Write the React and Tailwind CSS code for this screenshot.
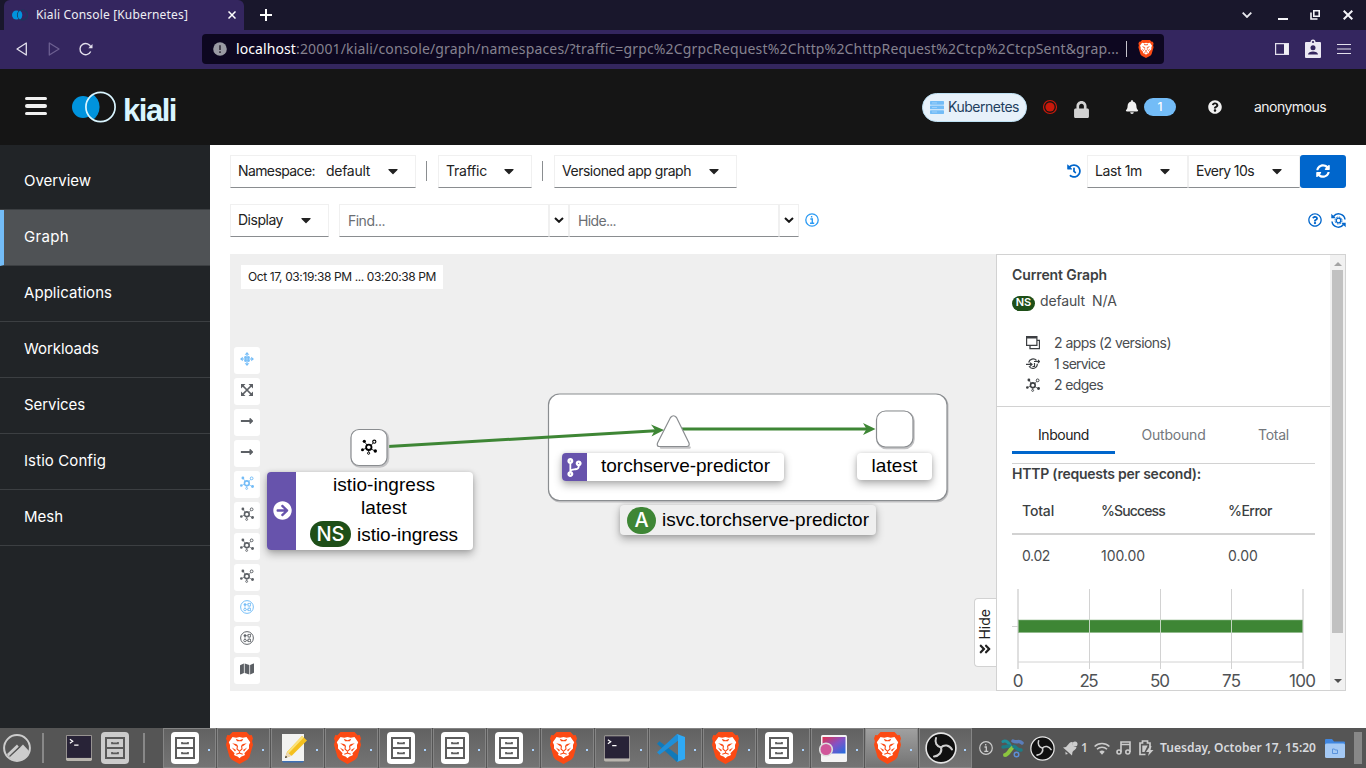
import { useLayoutEffect, useRef, useState } from "react";
import {
  FaArrowCircleRight, FaBell, FaCaretDown, FaCodeBranch, FaAngleDoubleDown, FaHistory,
  FaLock, FaLongArrowAltRight, FaMap, FaQuestionCircle, FaRegQuestionCircle, FaServer, FaSyncAlt,
} from "react-icons/fa";

/* A single line of text whose tracking is adjusted to fill the given width. */
function Text({ w, className = "", children }) {
  const ref = useRef(null);
  const [spacing, setSpacing] = useState(0);
  useLayoutEffect(() => {
    const natural = ref.current.getBoundingClientRect().width;
    setSpacing((w - natural) / String(children).length);
  }, [w, children]);
  return (
    <span ref={ref} className={`inline-block shrink-0 whitespace-nowrap ${className}`} style={{ letterSpacing: spacing }}>
      {children}
    </span>
  );
}

function Lion({ className }) {
  return (
    <svg viewBox="0 0 27 32" className={className}>
      <path fill="#fb4a14" d="M6.500 0h14l3 3.200 2.200-.3L27 6.500l-.9 2.700.9 3.600-3.600 12.400-2.200 2.600-7.700 4.200-7.700-4.200-2.200-2.600L0 12.800l.9-3.600L0 6.500l1.300-3.600 2.200.3z" />
      <path fill="#fff" d="M6.500 5l3.700.7 3.300-.8 3.300.8 3.700-.7 3.700 5.200-1.200 2.700 0 3.600-4.600 4.700.6 1.800-3 1.500-2.500 2.500-2.500-2.500-3-1.500.6-1.800L4 16.500l0-3.600-1.200-2.700z" />
      <path fill="#fb4a14" d="M6.200 11.300l3.800.8 1.500.9-1 1.600zM20.800 11.300l-3.800.8-1.500.9 1 1.600zM9.700 6.800l3.800 1.400 3.800-1.400-1.300 2.500h-5zM5.800 15.500l4.200 2.600-1 1.500zM21.200 15.500L17 18.100l1 1.500z" />
      <path stroke="#fb4a14" strokeWidth="1.100" fill="none" d="M11.500 13.500l-.5 3.500 2.500 2.300 2.500-2.300-.5-3.500M13.500 19v2.200M10.300 22.300l3.200-1.300 3.200 1.300" />
      <path fill="#fb4a14" d="M9 24.500l2.500 0 2 1.800 2-1.800 2.500 0-4.500 3z" />
      <path fill="#fff" d="M11 23.300h5l-2.500 2.300z" />
    </svg>
  );
}

function Topology({ className }) {
  return (
    <svg viewBox="0 0 16 16" className={className} fill="none" stroke="currentColor">
      <circle cx="7.800" cy="8.300" r="2.700" strokeWidth="1.800" />
      <circle cx="13.300" cy="2.700" r="1.600" strokeWidth="1.100" />
      <circle cx="7.600" cy="14.200" r="1.100" strokeWidth="1" />
      <g fill="currentColor" stroke="none">
        <circle cx="3.300" cy="2.300" r="1.600" />
        <circle cx="1.500" cy="10.800" r="1.500" />
        <circle cx="14.300" cy="12" r="1.700" />
      </g>
      <path strokeWidth=".8" d="M4 3.400l2 2.700M2.600 10.300l2.700-1M10 6.500l2.200-2.700M10 9.800l3 1.700M7.700 11v2" />
    </svg>
  );
}

function Boxes({ className }) {
  return (
    <svg viewBox="0 0 16 16" className={className} fill="none" stroke="currentColor">
      <circle cx="8" cy="8" r="7.300" strokeWidth="1.100" />
      <circle cx="5.700" cy="5.300" r="1.300" fill="currentColor" strokeWidth=".6" />
      <rect x="9.200" y="3.800" width="2.800" height="3" strokeWidth=".9" />
      <circle cx="5.700" cy="10.900" r="1.400" strokeWidth="1" />
      <rect x="9.200" y="9.400" width="2.800" height="2.800" strokeWidth=".9" />
      <path strokeWidth=".8" d="M7 5.300h2M5.700 7v2M7.200 10.900h2M10.500 7v2" />
    </svg>
  );
}

function Cabinet({ className, bg, fg }) {
  return (
    <svg viewBox="0 0 28 32" className={className}>
      <rect width="28" height="32" rx="4" fill={bg} />
      <g fill="none" stroke={fg} strokeWidth="2">
        <path d="M5 6h18v20H5zM5 16h18" />
        <path strokeWidth="1.700" d="M11 10v1.300h6V10M11 20v1.300h6V20" />
      </g>
    </svg>
  );
}

function Terminal({ className }) {
  return (
    <svg viewBox="0 0 27 27" className={className}>
      <rect width="27" height="27" rx="1.500" fill="#b9b5ae" />
      <rect x=".8" y=".8" width="25.400" height="23" fill="#282337" />
      <path d="M4 4.500l3 2-3 2M8.500 10.500h4.500" fill="none" stroke="#fff" strokeWidth="1.200" />
    </svg>
  );
}

function Notes({ className }) {
  return (
    <svg viewBox="0 0 27 30" className={className}>
      <path d="M2 1h22v27H2z" fill="#f3f3f1" />
      <path d="M2 28h22l-1 1.500H3z" fill="#3d6fb5" />
      <path d="M5 25l2-6L22 3l5 4.500-15 15z" fill="#f4c01e" />
      <path d="M7 19L22 3l1.800 1.600L8.500 20.500z" fill="#fbe27a" />
      <path d="M5 25l2-6 4.500 3.800z" fill="#ead8b8" />
      <path d="M5 25l.8-2.300 1.500 1.500z" fill="#222" />
    </svg>
  );
}

function Code({ className }) {
  return (
    <svg viewBox="0 0 28 28" className={className}>
      <path fill="#1179b8" d="M0 9.700l2.500-2.500L22 22v5L20 28z" />
      <path fill="#1f8fd8" d="M0 18.300l2.500 2.500L22 6V1L20 0z" />
      <path fill="#2fa9f4" d="M20 0l8 3v22l-8 3 1-2V2z" />
    </svg>
  );
}

function Screenshot({ className }) {
  return (
    <svg viewBox="0 0 28 27" className={className}>
      <defs>
        <linearGradient id="shot" x1="0" y1="0" x2="1" y2="1">
          <stop offset="0" stopColor="#e2304d" /><stop offset=".5" stopColor="#8552c4" /><stop offset="1" stopColor="#1f6fe0" />
        </linearGradient>
      </defs>
      <rect x="2" y="0" width="26" height="27" rx="1.500" fill="#f4f4f4" />
      <rect x="3.500" y="2" width="23" height="16.500" fill="url(#shot)" />
      <circle cx="7" cy="14.500" r="6.300" fill="#d0569a" stroke="#ddd" strokeWidth="1.600" />
    </svg>
  );
}

function Obs({ className }) {
  return (
    <svg viewBox="0 0 32 32" className={className}>
      <circle cx="16" cy="16" r="14.900" fill="#101010" stroke="#e6e6e6" strokeWidth="1.600" />
      <g fill="none" stroke="#cfcfcf" strokeWidth="2" strokeLinecap="round">
        <path d="M16 15.500c-4.500-1-6.500-5-5-9.500" />
        <path d="M16 15.500c3-3.500 8.500-2.500 11 2" />
        <path d="M16 15.500c1.500 4.500-2 8.500-7 9" />
      </g>
    </svg>
  );
}

function Swirl({ className }) {
  return (
    <svg viewBox="0 0 24 20" className={className} fill="none" strokeLinecap="round">
      <path d="M2 3.500c3-1.500 6 1 8 5.500" stroke="#1f8f9a" strokeWidth="3" />
      <path d="M4 17c3 0 4-4 7-7" stroke="#8cc63f" strokeWidth="4" />
      <path d="M12 3c4 2 6-1 9 2" stroke="#5a7dba" strokeWidth="3.500" />
      <path d="M13 8.500c3 1 3 4 7 3.500M2 9c3 0 4-1 6-1" stroke="#1d7d86" strokeWidth="3.500" />
      <circle cx="15.500" cy="16.500" r="2.300" stroke="#5d8fd8" strokeWidth="1.400" />
    </svg>
  );
}

const Kiali = ({ className }) => (
  <svg viewBox="0 0 46 32" className={className}>
    <circle cx="11" cy="16" r="11" fill="#0093dd" />
    <path d="M20.500 3a15.500 15.500 0 0 1 0 26 15.500 15.500 0 0 1 0-26z" fill="#0093dd" />
    <circle cx="28.500" cy="16" r="14.600" fill="none" stroke="#d9f5ff" strokeWidth="1.700" />
  </svg>
);

function Browser() {
  return (
    <>
      <div className="flex h-[30px] items-center bg-[#19172c] pl-1 text-white">
        <div className="flex h-full w-60 items-center rounded-t-md bg-[#34265f] pl-2">
          <svg viewBox="0 0 16 12" className="h-3 w-4">
            <circle cx="4.500" cy="6" r="4.500" fill="#0093dd" />
            <circle cx="10.500" cy="6" r="5" fill="none" stroke="#173b5c" strokeWidth="1.200" />
            <path d="M8 1.500a5.500 5.500 0 0 1 0 9 5.500 5.500 0 0 1 0-9z" fill="#0093dd" />
          </svg>
          <Text w={152} className="ml-2 font-['Noto_Sans'] text-xs text-[#eeeef4]">Kiali Console [Kubernetes]</Text>
          <svg viewBox="0 0 8 8" className="ml-10 h-2 w-2" stroke="#fff" strokeWidth="1.500"><path d="M.5.5l7 7M7.500.5l-7 7" /></svg>
        </div>
        <svg viewBox="0 0 12 12" className="ml-4 h-3 w-3" stroke="#fff" strokeWidth="2"><path d="M6 0v12M0 6h12" /></svg>
        <div className="ml-auto flex items-center pr-[13px]">
          <svg viewBox="0 0 10 6" className="mr-[26px] h-1.5 w-2.5" fill="none" stroke="#e8e8ee" strokeWidth="1.800"><path d="M.7.700L5 5 9.300.7" /></svg>
          <svg viewBox="0 0 10 10" className="mr-[22px] h-2.5 w-2.5" fill="#f4f4f8"><path d="M0 8h10v2H0z" /></svg>
          <svg viewBox="0 0 10 10" className="mr-[23px] h-2.5 w-2.5" fill="none" stroke="#f4f4f8" strokeWidth="1.600"><path d="M3.800.8h5.400v5.400H3.800zM1 2.500V9h6.500" /></svg>
          <svg viewBox="0 0 10 10" className="h-2.5 w-2.5" stroke="#f4f4f8" strokeWidth="2"><path d="M.7.700l8.600 8.600M9.300.7L.7 9.300" /></svg>
        </div>
      </div>
      <div className="flex h-[39px] items-center bg-[#34265f] pb-0.5 pl-4">
        <svg viewBox="0 0 12 14" className="h-3.5 w-3" fill="none" stroke="#e2dfec" strokeWidth="1.300" strokeLinejoin="round"><path d="M10.300 1v12L1 7z" /></svg>
        <svg viewBox="0 0 12 14" className="ml-5 h-3.5 w-3" fill="none" stroke="#6c5f91" strokeWidth="1.300" strokeLinejoin="round"><path d="M1.300 1v12L11 7z" /></svg>
        <svg viewBox="0 0 14 14" className="ml-[19px] h-3.5 w-3.5" fill="none" stroke="#e2dfec" strokeWidth="1.400"><path d="M11.700 9.500a5.600 5.600 0 1 1 .3-4" /><path d="M13.500 2v4.200H9.300z" fill="#e2dfec" stroke="none" /></svg>
        <div className="ml-[109px] flex h-[30px] w-[962px] items-center rounded bg-[#0d0720] pl-[11px]">
          <svg viewBox="0 0 14 14" className="h-3.5 w-3.5"><circle cx="7" cy="7" r="6.800" fill="#9a9ba3" /><path d="M7 3.300v4.700M7 9.300v1.600" stroke="#38333f" strokeWidth="1.700" /></svg>
          <div className="ml-[9px] flex font-['Noto_Sans'] text-sm text-[#85828f]">
            <Text w={60} className="text-white">localhost</Text>
            <Text w={823}>:20001/kiali/console/graph/namespaces/?traffic=grpc%2CgrpcRequest%2Chttp%2ChttpRequest%2Ctcp%2CtcpSent&amp;grap...</Text>
          </div>
          <span className="ml-[7px] h-4 w-px bg-[#c5c3cc]" />
          <Lion className="ml-[11px] h-[18px] w-4" />
        </div>
        <svg viewBox="0 0 14 12" className="ml-auto h-3 w-3.5"><path d="M.6.600h12.800v10.800H.6z" fill="none" stroke="#e2dfec" strokeWidth="1.200" /><path d="M9 1h4.500v10H9z" fill="#f1f0f5" /></svg>
        <svg viewBox="0 0 16 19" className="ml-4 h-[19px] w-4"><path d="M1 3h4.500a2.500 2.500 0 0 1 5 0H15a1 1 0 0 1 1 1v14a1 1 0 0 1-1 1H1a1 1 0 0 1-1-1V4a1 1 0 0 1 1-1z" fill="#ece9f3" /><circle cx="8" cy="3" r="1.100" fill="#34265f" /><circle cx="8" cy="8.700" r="2.500" fill="#34265f" /><path d="M3 15.500c0-4 10-4 10 0z" fill="#34265f" /></svg>
        <svg viewBox="0 0 14 12" className="ml-4 mr-[15px] h-3 w-3.5" stroke="#e2dfec" strokeWidth="1.200"><path d="M0 1.500h14M0 6h14M0 10.500h14" /></svg>
      </div>
    </>
  );
}

function Masthead() {
  return (
    <header className="flex h-[76px] items-center bg-[#151515] text-sm text-[#f0f0f0]">
      <div className="mb-0.5 ml-[25px] flex w-[22px] flex-col gap-1">
        <span className="h-[3.500px] rounded-sm bg-[#f0f0f0]" />
        <span className="h-[3.500px] rounded-sm bg-[#f0f0f0]" />
        <span className="h-[3.500px] rounded-sm bg-[#f0f0f0]" />
      </div>
      <Kiali className="ml-[25px] h-8 w-[46px]" />
      <Text w={53} className="ml-[5px] mt-[7px] font-['Liberation_Sans'] text-[31px] leading-8 font-bold text-[#d9f5ff]">kiali</Text>
      <div className="ml-auto flex items-center">
        <div className="flex h-[29px] w-[105px] items-center rounded-full border border-[#bee1f4] bg-[#e7f1fa] pl-[7px]">
          <svg viewBox="0 0 14 13" className="h-[13px] w-3.5"><g fill="#73bcf7"><rect width="14" height="3.700" rx=".6" /><rect y="4.600" width="14" height="3.700" rx=".6" /><rect y="9.200" width="14" height="3.700" rx=".6" /></g><path d="M2 1.900h5M2 6.500h5M2 11h5" stroke="#a9d5fa" strokeWidth=".8" /></svg>
          <Text w={71} className="ml-1 text-[#1f3f5f]">Kubernetes</Text>
        </div>
        <svg viewBox="0 0 16 16" className="ml-[15px] h-4 w-4"><circle cx="8" cy="8" r="6.500" fill="none" stroke="#c9190b" strokeWidth="1.200" /><circle cx="8" cy="8" r="4.600" fill="#c9190b" /></svg>
        <FaLock className="mt-1 ml-4 h-[17px] w-[15px] text-[#d2d2d2]" />
        <FaBell className="ml-9 h-3.5 w-3.5 text-[#f0f0f0]" />
        <span className="ml-[5px] flex h-[18px] w-8 items-center justify-center rounded-full bg-[#73bcf7] text-xs font-medium text-white">1</span>
        <FaQuestionCircle className="ml-8 h-3.5 w-3.5" />
        <Text w={72} className="mr-10 ml-8">anonymous</Text>
      </div>
    </header>
  );
}

const NAV = [["Overview", 67], ["Graph", 45], ["Applications", 88], ["Workloads", 75], ["Services", 61], ["Istio Config", 82], ["Mesh", 39]];

function Sidebar() {
  return (
    <nav className="w-[210px] shrink-0 bg-[#212427] pt-[9px] text-[15px] text-white">
      {NAV.map(([label, w]) => (
        <div key={label} className={`flex h-14 items-center border-b border-[#3c3f42] ${label === "Graph" ? "border-l-4 border-l-[#73bcf7] bg-[#4f5255] pl-5" : "pl-6"}`}>
          <Text w={w}>{label}</Text>
        </div>
      ))}
    </nav>
  );
}

function Select({ className, children }) {
  return (
    <div className={`flex h-[33px] items-center border border-[#f0f0f0] border-b-[#8a8d90] pb-px pl-[7px] ${className}`}>
      {children}
      <FaCaretDown className="mr-4 ml-auto h-4 w-3" />
    </div>
  );
}

function Chevron() {
  return (
    <div className="flex h-[33px] w-5 items-center justify-center border border-[#f0f0f0] border-b-[#8a8d90]">
      <svg viewBox="0 0 10 6" className="mb-0.5 h-1.5 w-2.5" fill="none" stroke="#151515" strokeWidth="2"><path d="M1 1l4 3.800L9 1" /></svg>
    </div>
  );
}

function Toolbars() {
  return (
    <div className="pr-5 pl-5 text-sm text-[#222]">
      <div className="flex items-center pt-2.5">
        <Select className="w-[186px]"><Text w={77}>Namespace:</Text><Text w={44} className="ml-[11px]">default</Text></Select>
        <span className="mb-0.5 ml-2.5 h-5 w-px bg-[#8a8d90]" />
        <Select className="ml-[11px] w-[94px]"><Text w={41}>Traffic</Text></Select>
        <span className="mb-0.5 ml-2.5 h-5 w-px bg-[#8a8d90]" />
        <Select className="ml-[11px] w-[183px]"><Text w={129}>Versioned app graph</Text></Select>
        <FaHistory className="mr-1.5 mb-0.5 ml-auto h-3.5 w-3.5 text-[#06c]" />
        <Select className="w-[101px]"><Text w={47}>Last 1m</Text></Select>
        <Select className="w-[112px]"><Text w={58}>Every 10s</Text></Select>
        <div className="flex h-[33px] w-[46px] items-center justify-center rounded-[3px] bg-[#06c] pb-px text-white"><FaSyncAlt className="h-3.5 w-3.5" /></div>
      </div>
      <div className="flex items-center pt-4">
        <Select className="w-[99px]"><Text w={45}>Display</Text></Select>
        <div className="ml-2.5 flex h-[33px] w-[210px] items-center border border-[#f0f0f0] border-b-[#8a8d90] pl-2 text-[#6a6e73]"><Text w={37}>Find...</Text></div>
        <Chevron />
        <div className="flex h-[33px] w-[210px] items-center border border-[#f0f0f0] border-b-[#8a8d90] pl-2 text-[#6a6e73]"><Text w={38}>Hide...</Text></div>
        <Chevron />
        <svg viewBox="0 0 14 14" className="mb-0.5 ml-1.5 h-3.5 w-3.5" fill="none" stroke="#2b9af3"><circle cx="7" cy="7" r="6.200" strokeWidth="1.300" /><path d="M5.300 6h2v4M5 10.200h4.200M6.600 3v1.600" strokeWidth="1.400" /></svg>
        <FaRegQuestionCircle className="mb-0.5 ml-auto h-3.5 w-3.5 text-[#06c]" />
        <svg viewBox="0 0 15 15" className="mb-px ml-[9px] h-[15px] w-[15px]" fill="none" stroke="#06c">
          <path d="M2.500 3.500a6.400 6.400 0 0 1 11.500 3M12.500 11.500a6.400 6.400 0 0 1-11.500-3" strokeWidth="1.500" />
          <path d="M.3.800v4.500h4.500zM14.700 14.200V9.700h-4.500z" fill="#06c" stroke="none" />
          <circle cx="7.500" cy="7.500" r="2.300" strokeWidth="1.300" />
          <circle cx="7.500" cy="7.500" r="3.500" strokeWidth="1" strokeDasharray="1.500 1.250" />
        </svg>
      </div>
    </div>
  );
}

function GraphTools() {
  const icon = "h-3.5 w-3.5";
  const tools = [
    [<svg viewBox="0 0 14 14" className={icon} fill="currentColor"><path d="M7 0l2.300 2.800H4.700zM7 14l2.300-2.800H4.700zM0 7l2.800-2.300v4.600zM14 7l-2.800-2.300v4.600z" /><path d="M4 5.300h6M4 8.700h6M5.300 4v6M8.700 4v6M3 7h8M7 3v8" stroke="currentColor" strokeWidth="1.100" /></svg>, true],
    [<svg viewBox="0 0 14 14" className={icon} fill="currentColor"><path d="M1 1h4.500L1 5.500zM13 1H8.500L13 5.500zM1 13h4.500L1 8.500zM13 13H8.500L13 8.500z" /><path d="M2 2l10 10M12 2L2 12" stroke="currentColor" strokeWidth="1.700" /></svg>],
    [<FaLongArrowAltRight className={icon} />],
    [<FaLongArrowAltRight className={icon} />],
    [<Topology className={icon} />, true],
    [<Topology className={icon} />],
    [<Topology className={icon} />],
    [<Topology className={icon} />],
    [<Boxes className={icon} />, true],
    [<Boxes className={icon} />],
    [<FaMap className={icon} />],
  ];
  return (
    <div className="absolute top-[93px] left-1 flex flex-col gap-1">
      {tools.map(([glyph, active], i) => (
        <div key={i} className={`flex h-[27px] w-[26px] items-center justify-center rounded-[3px] bg-white pb-[3px] ${active ? "text-[#73bcf7]" : "text-[#5c6065]"}`}>{glyph}</div>
      ))}
    </div>
  );
}

const labelShadow = "shadow-[0_4px_8px_rgba(3,3,3,0.3),0_0_4px_rgba(3,3,3,0.12)]";

function Graph() {
  return (
    <div className="relative w-[766px] bg-[#efefef] font-['Liberation_Sans'] text-[19px] text-black">
      <svg className="absolute inset-0 h-[436px] w-[766px]" fill="none">
        <rect x="319.500" y="141" width="398" height="106.500" rx="11" fill="none" stroke="#bfbfc1" strokeWidth="2" />
        <rect x="318.500" y="140" width="398.500" height="106.500" rx="11" fill="#fff" stroke="#8a8d90" strokeWidth="1.200" />
        <g stroke="#3e8635" strokeWidth="3">
          <path d="M158 192.500L430 176.500" /><path d="M452 175h188" />
        </g>
        <g fill="#3e8635"><path d="M434 176l-13-5.500 4 5.500-3.500 6.500zM645.500 175l-12.500-6 3.500 6-3.500 6z" /></g>
        <g stroke="#c3c3c5" strokeWidth="2.500">
          <rect x="122" y="176.500" width="36" height="36" rx="8" /><rect x="647.500" y="158" width="36" height="36" rx="9" />
          <path d="M431 193.500h28.500" strokeLinecap="round" />
        </g>
        <g stroke="#8a8d90" strokeWidth="1.200" fill="#fff" strokeLinejoin="round">
          <rect x="121" y="175.500" width="36" height="36" rx="8" /><rect x="646.500" y="157" width="36.500" height="36" rx="9" />
          <path d="M440.500 163.500q3-3.500 6 0l12.500 25.500q1 3.500-2.500 3.500h-27q-3 0-2-3.500z" />
        </g>
      </svg>
      <Topology className="absolute top-[185px] left-[131px] h-4 w-4" />
      <div className="absolute top-[11px] left-[11px] flex h-6 w-[202px] items-center bg-white pl-[7px] font-[Inter] text-xs text-[#222]">
        <Text w={188}>Oct 17, 03:19:38 PM ... 03:20:38 PM</Text>
      </div>
      <GraphTools />
      <div className={`absolute top-[218px] left-[36.500px] flex h-[78px] w-[206px] overflow-hidden rounded bg-white ${labelShadow}`}>
        <div className="flex w-[29px] items-center justify-center bg-[#6753ac] pl-0.5 pb-px text-white"><FaArrowCircleRight className="h-[19px] w-[19px]" /></div>
        <div className="flex flex-1 flex-col items-center pt-px leading-[23px]">
          <Text w={102}>istio-ingress</Text>
          <Text w={46}>latest</Text>
          <div className="mt-0.5 flex items-center gap-1.5">
            <span className="flex h-[26px] w-[41px] items-center justify-center rounded-full bg-[#1e4f18] font-[Inter] text-xl font-medium text-white">NS</span>
            <Text w={101}>istio-ingress</Text>
          </div>
        </div>
      </div>
      <div className={`absolute top-[199px] left-[332px] flex h-7 w-[222px] items-center overflow-hidden rounded bg-white ${labelShadow}`}>
        <span className="flex h-full w-[25px] items-center justify-center bg-[#6753ac] text-white"><FaCodeBranch className="h-[19px] w-[17px]" /></span>
        <Text w={169} className="mb-0.5 ml-[14px]">torchserve-predictor</Text>
      </div>
      <div className={`absolute top-[199px] left-[627px] flex h-[27px] w-[75px] items-center justify-center rounded bg-white ${labelShadow}`}><Text w={46}>latest</Text></div>
      <div className={`absolute top-[251px] left-[390px] flex h-[30px] w-[256px] items-center rounded bg-[#efefef] pl-[7px] ${labelShadow}`}>
        <span className="flex h-[27px] w-[29px] items-center justify-center rounded-full bg-[#3e8635] font-[Inter] text-xl font-medium text-white">A</span>
        <Text w={207} className="ml-1.5">isvc.torchserve-predictor</Text>
      </div>
      <div className="absolute right-0 bottom-6 flex h-[69px] w-[22px] flex-col items-center rounded-l border border-r-0 border-[#d2d2d2] bg-white pt-3 pr-0.5 font-[Inter] text-sm text-[#222]">
        <span className="h-[29px] leading-5 [writing-mode:sideways-lr]">Hide</span>
        <FaAngleDoubleDown className="mt-[2px] h-3.5 w-3.5 -rotate-90" />
      </div>
    </div>
  );
}

function Chart() {
  return (
    <svg viewBox="0 0 318 110" className="h-[110px] w-[318px]">
      <path d="M6 10v80M291 10v80" stroke="#dcdcdc" strokeWidth="1.800" />
      <path d="M77.500 10v80M148.500 10v80M219.500 10v80M0 47.500h6M6 83h285" stroke="#d2d2d2" />
      <rect x="6.500" y="41" width="284" height="12.500" fill="#3e8635" stroke="#8bb585" strokeWidth=".6" />
      <path d="M77.500 40v14M148.500 40v14M219.500 40v14" stroke="#c4d6c2" />
      <g fontFamily="Inter" fontSize="17" fill="#4f5255" textAnchor="middle">
        <text x="6" y="107.500" textLength="10">0</text><text x="77" y="107.500" textLength="19">25</text><text x="148" y="107.500" textLength="20">50</text>
        <text x="219.500" y="107.500" textLength="19">75</text><text x="290.500" y="107.500" textLength="27">100</text>
      </g>
    </svg>
  );
}

function SummaryPanel() {
  return (
    <aside className="flex w-[350px] overflow-hidden border border-[#d2d2d2] bg-white text-sm text-[#4a4d50]">
      <div className="h-[435px] w-[333px]">
        <div className="h-[152px] border-b border-[#d2d2d2] pt-2 pl-[15px]">
          <div className="flex h-6 items-center"><Text w={95} className="font-semibold text-[#3c3f42]">Current Graph</Text></div>
          <div className="mt-[3px] flex h-6 items-center">
            <span className="mt-0.5 flex h-[15px] w-[23px] items-center justify-center rounded-full bg-[#1e4f18] text-[11px] font-semibold text-white">NS</span>
            <Text w={45} className="mb-0.5 ml-[5px]">default</Text><Text w={25} className="mb-0.5 ml-[7px]">N/A</Text>
          </div>
          <div className="mt-[18px] pl-[14px]">
            <div className="flex h-[21px] items-center">
              <svg viewBox="0 0 14 14" className="h-3.5 w-3.5" fill="none" stroke="#3c3f42"><path d="M.6.700h10.300v8.600H.6z" strokeWidth="1.200" /><path d="M.6 1.500h10.300" strokeWidth="2" /><path d="M11 4.300h2.500v8.300H4v-3" strokeWidth="1.300" /></svg>
              <Text w={117} className="ml-[14px]">2 apps (2 versions)</Text>
            </div>
            <div className="flex h-[21px] items-center">
              <svg viewBox="0 0 14 12" className="h-3 w-3.5" fill="none" stroke="#3c3f42" strokeWidth="1.200"><path d="M2.700 4.500a4.500 4.500 0 0 1 7.800-2M11.300 5.800a4.500 4.500 0 0 1-8.300 2.500M0 6.300h5.500M4 8.300l2-2-2-1.500M6.500 8.500h2V5M8 3.500h5.500M12 2l1.500 1.500L12 5" /></svg>
              <Text w={51} className="ml-[14px]">1 service</Text>
            </div>
            <div className="flex h-[21px] items-center"><Topology className="h-3.5 w-3.5 text-[#3c3f42]" /><Text w={49} className="ml-[14px]">2 edges</Text></div>
          </div>
        </div>
        <div className="mx-[15px] mt-[10px] flex h-[37px] text-[#73777c]">
          <div className="flex w-[103px] items-center justify-center border-b-3 border-[#06c] pt-0.5 text-[#222]"><Text w={51}>Inbound</Text></div>
          <div className="flex w-[117px] items-center justify-center pb-0.5"><Text w={64}>Outbound</Text></div>
          <div className="flex w-[83px] items-center justify-center pb-0.5"><Text w={31}>Total</Text></div>
        </div>
        <div className="mr-[15px] ml-[15px] mt-[9px] border-t border-[#d2d2d2]">
          <div className="flex h-[21px] items-center pb-0.5"><Text w={189} className="font-semibold text-[#3c3f42]">HTTP (requests per second):</Text></div>
          <div className="grid h-[50px] grid-cols-[79px_127px_1fr] items-center border-b-2 border-[#d2d2d2] pt-1 pl-2.5 font-medium text-[#3c3f42]">
            <Text w={32} className="justify-self-start">Total</Text><Text w={64} className="justify-self-start">%Success</Text><Text w={44} className="justify-self-start">%Error</Text>
          </div>
          <div className="grid h-[44px] grid-cols-[79px_127px_1fr] items-center pb-0.5 pl-2.5">
            <Text w={28} className="justify-self-start">0.02</Text><Text w={44} className="justify-self-start">100.00</Text><Text w={30} className="justify-self-start">0.00</Text>
          </div>
          <Chart />
        </div>
      </div>
      <div className="flex w-[15px] flex-col items-center bg-[#f1f1f1]">
        <svg viewBox="0 0 8 4" className="mt-[7px] h-1 w-2"><path d="M4 0l4 4H0z" fill="#a3a3a3" /></svg>
        <span className="mt-1 h-[363px] w-[11px] bg-[#c1c1c1]" />
        <svg viewBox="0 0 8 4" className="mt-auto mb-[7px] h-1 w-2"><path d="M4 4l4-4H0z" fill="#505050" /></svg>
      </div>
    </aside>
  );
}

const white = { bg: "#fff", fg: "#5d5d5d" };
const APPS = ["files", "brave", "notes", "brave", "files", "files", "files", "brave", "terminal", "code", "brave", "files", "shot", "brave", "obs"];

function AppIcon({ kind }) {
  if (kind === "files") return <Cabinet {...white} className="h-8 w-7" />;
  if (kind === "brave") return <Lion className="h-8 w-[27px]" />;
  if (kind === "notes") return <Notes className="h-[30px] w-[27px]" />;
  if (kind === "terminal") return <Terminal className="h-[27px] w-[26px]" />;
  if (kind === "code") return <Code className="h-7 w-7" />;
  if (kind === "shot") return <Screenshot className="h-[27px] w-7" />;
  return <Obs className="h-8 w-8" />;
}

function Taskbar() {
  return (
    <footer className="flex h-10 items-center bg-[#555] text-[#d2d2d2]">
      <svg viewBox="0 0 28 28" className="ml-[3px] h-7 w-7"><circle cx="14" cy="14" r="12.900" fill="none" stroke="#ccc" strokeWidth="2" /><path d="M4 20L14 10.500l2 2.500-6 7 8-7.500 2-2 6 6.500c-1 6-6 9.500-12 9.500-5 0-8-2.500-10-6.500z" fill="#ccc" /><path d="M6.500 22.500L17 12.500" stroke="#555" strokeWidth="1.300" /></svg>
      <span className="ml-[11px] h-[30px] w-0.5 bg-[#888]" />
      <Terminal className="ml-[22px] h-[26px] w-[26px]" />
      <Cabinet bg="#ccc" fg="#5a5a5a" className="ml-[9px] h-8 w-7" />
      <span className="ml-[14px] h-[30px] w-0.5 bg-[#888]" />
      <div className="ml-[18px] flex gap-px">
        {APPS.map((kind, i) => (
          <div key={i} className={`flex h-10 w-[53px] items-center border border-[#858585] ${i === 13 ? "bg-gradient-to-b from-[#a0a0a0] to-[#747474]" : "bg-gradient-to-b from-[#626262] to-[#747474]"}`}>
            <span className="flex w-[42px] justify-center"><AppIcon kind={kind} /></span>
            <span className="mt-1 ml-0.5 h-0.5 w-0.5 bg-[#a9d2ff]" />
          </div>
        ))}
      </div>
      <svg viewBox="0 0 14 14" className="ml-[7px] h-3.5 w-3.5" fill="none" stroke="#ccc"><circle cx="7" cy="7" r="6.300" strokeWidth="1.200" /><path d="M5.500 6h1.800v4M5.300 10.300h4M6.700 3v1.500" strokeWidth="1.300" /></svg>
      <Swirl className="ml-2 h-5 w-6" />
      <Obs className="ml-[5px] h-[25px] w-[25px]" />
      <svg viewBox="0 0 15 15" className="ml-[8px] h-[15px] w-[15px]" fill="#ccc"><path d="M0 6.500l3-.5 3.500-4c1.500-1.500 3-1 3.500-.5-1 3 1 4.500 3.500 4.500 0 2-3 3.500-4 5L9 14.500zM2.500 10.500L5 13l-2.500.5z" /><circle cx="12" cy="3" r="2.500" /></svg>
      <Text w={6} className="ml-[3px] font-['Noto_Sans'] text-xs font-semibold">1</Text>
      <svg viewBox="0 0 16 13" className="ml-[7px] h-[13px] w-4" fill="none" stroke="#ccc" strokeWidth="1.600"><path d="M.6 4.500a10.500 10.500 0 0 1 14.800 0M3 7.300a7 7 0 0 1 10 0" /><path d="M5.300 9.800a3.900 3.900 0 0 1 5.400 0L8 12.700z" fill="#ccc" stroke="none" /></svg>
      <svg viewBox="0 0 15 14" className="ml-1.5 h-3.5 w-[15px]" fill="none" stroke="#ccc" strokeWidth="1.600"><path d="M5 11V4.500M5 4.500V1h9v10M5 3.500h9" /><circle cx="3" cy="11" r="2" /><circle cx="11.800" cy="11" r="2" /></svg>
      <svg viewBox="0 0 15 16" className="ml-2 h-4 w-[15px]"><path d="M6.500 14.500H1V3h2.500V1h5v2H11v4" fill="none" stroke="#ccc" strokeWidth="1.700" /><path d="M3.300 5.500h5.400L5.500 12H3.300zM11 6l-4 6h3l-1 4 5.500-6h-3l1-4z" fill="#ccc" /></svg>
      <Text w={156} className="ml-[6px] font-['Noto_Sans'] text-[12px] font-semibold text-[#d8dade]">Tuesday, October 17, 15:20</Text>
      <svg viewBox="0 0 20 19" className="ml-auto mr-[9px] h-[19px] w-5"><path d="M0 1a1 1 0 0 1 1-1h6l2 2.500h10a1 1 0 0 1 1 1V8H0z" fill="#3f86e0" /><rect y="4.500" width="20" height="14.500" rx="1.500" fill="#a4c9f4" /><path d="M7.500 10h2l.7 1h2.300v3.500h-5z" fill="none" stroke="#5a93dc" /></svg>
      <span className="mr-1 h-8 w-2 bg-[#888]" />
    </footer>
  );
}

export default function App() {
  return (
    <div className="flex h-[768px] w-[1366px] flex-col overflow-hidden bg-white font-[Inter,sans-serif]">
      <Browser />
      <Masthead />
      <div className="flex h-[583px]">
        <Sidebar />
        <main className="w-[1156px]">
          <Toolbars />
          <div className="mt-[17px] ml-5 flex h-[437px]">
            <Graph />
            <SummaryPanel />
          </div>
        </main>
      </div>
      <Taskbar />
    </div>
  );
}
